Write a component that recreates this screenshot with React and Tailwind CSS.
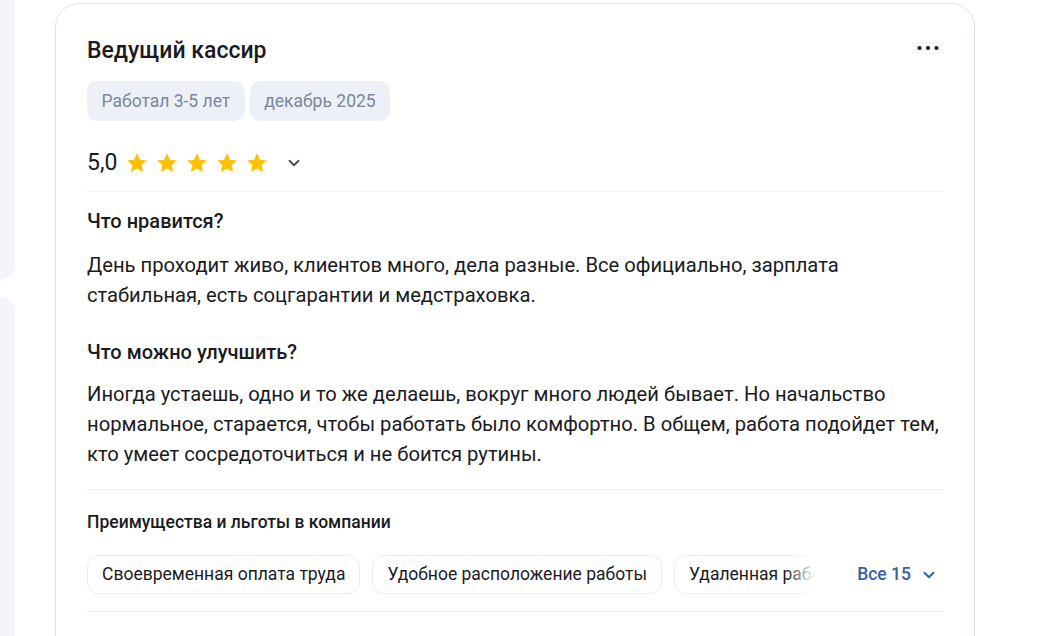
import React from 'react'
import { ChevronDown } from 'lucide-react'

const BENEFITS = ['Своевременная оплата труда', 'Удобное расположение работы', 'Удаленная работа']

function Star() {
  return (
    <svg width="24" height="24" viewBox="0 0 24 24" className="shrink-0">
      <path
        d="M12 2.2l2.9 6.6 7.1.6-5.4 4.7 1.6 7-6.2-3.7-6.2 3.7 1.6-7L2 9.4l7.1-.6z"
        fill="#ffc000"
      />
    </svg>
  )
}

function Dots() {
  return (
    <svg width="24" height="24" viewBox="0 0 24 24" className="shrink-0">
      <circle cx="3.5" cy="12" r="2.1" fill="#1a1a1a" />
      <circle cx="12" cy="12" r="2.1" fill="#1a1a1a" />
      <circle cx="20.5" cy="12" r="2.1" fill="#1a1a1a" />
    </svg>
  )
}

export default function App() {
  return (
    <div className="flex h-[636px] overflow-hidden bg-white text-[#1b1b1f] [font-family:Roboto,'Noto_Sans',sans-serif]">
      {/* ── Left rail ─────────────────────────── */}
      <div className="w-[15px] shrink-0 flex flex-col gap-[17px]">
        <div className="h-[280px] bg-[#f4f5fa] rounded-br-[16px]" />
        <div className="flex-1 bg-[#f4f5fa] rounded-tr-[16px]" />
      </div>

      {/* ── Review card ───────────────────────── */}
      <div className="ml-[40px] mt-[3px] w-[920px] shrink-0 h-[700px] rounded-[24px] border border-[#dde2eb] bg-white pl-[31px] pr-[30px] pt-[32px]">
        {/* Header */}
        <div className="flex items-start justify-between">
          <h2 className="text-[23px] leading-[30px] font-medium">Ведущий кассир</h2>
          <div className="mt-0 mr-[4px]">
            <Dots />
          </div>
        </div>

        {/* Tags */}
        <div className="mt-[15px] flex gap-[5px]">
          <span className="h-[40px] px-[14.5px] flex items-center rounded-[10px] bg-[#edf0f7] text-[17.5px] text-[#7b879b]">
            Работал 3-5 лет
          </span>
          <span className="h-[40px] px-[14.5px] flex items-center rounded-[10px] bg-[#edf0f7] text-[17.5px] text-[#7b879b]">
            декабрь 2025
          </span>
        </div>

        {/* Rating */}
        <div className="mt-[26px] h-[32px] flex items-center">
          <span className="text-[23px] font-normal mr-[8px]">5,0</span>
          <div className="flex gap-[6px]">
            <Star /><Star /><Star /><Star /><Star />
          </div>
          <ChevronDown size={18} strokeWidth={2.4} className="ml-[16px] text-[#4a4a4f]" />
        </div>

        <div className="mt-[12px] h-px bg-[#eef0f6]" />

        {/* Pros */}
        <h3 className="mt-[17px] text-[20px] leading-[24px] font-medium">Что нравится?</h3>
        <p className="mt-[17px] text-[20.2px] leading-[30px] whitespace-nowrap">
          День проходит живо, клиентов много, дела разные. Все официально, зарплата
          <br />
          стабильная, есть соцгарантии и медстраховка.
        </p>

        {/* Cons */}
        <h3 className="mt-[30px] text-[20px] leading-[24px] font-medium">Что можно улучшить?</h3>
        <p className="mt-[15px] text-[20.2px] leading-[30px] whitespace-nowrap">
          Иногда устаешь, одно и то же делаешь, вокруг много людей бывает. Но начальство
          <br />
          нормальное, старается, чтобы работать было комфортно. В общем, работа подойдет тем,
          <br />
          кто умеет сосредоточиться и не боится рутины.
        </p>

        <div className="mt-[20px] h-px bg-[#eef0f6]" />

        {/* Benefits */}
        <h4 className="mt-[22px] text-[17.5px] leading-[20px] font-medium">Преимущества и льготы в компании</h4>
        <div className="mt-[23px] flex items-center">
          <div className="relative w-[728px] overflow-hidden">
            <div className="flex gap-[12px]">
              {BENEFITS.map((b) => (
                <span
                  key={b}
                  className="h-[39px] px-[14px] flex items-center shrink-0 rounded-[12px] border border-[#e9ecf4] text-[17.5px] whitespace-nowrap"
                >
                  {b}
                </span>
              ))}
            </div>
            <div className="absolute right-0 top-0 h-full w-[30px] bg-gradient-to-r from-white/0 to-white" />
          </div>
          <button className="ml-auto mr-[6px] flex items-center gap-[9px] text-[17.5px] font-medium text-[#3a5fa5]">
            Все 15
            <ChevronDown size={18} strokeWidth={2.6} />
          </button>
        </div>

        <div className="mt-[17px] h-px bg-[#eef0f6]" />
      </div>
    </div>
  )
}
